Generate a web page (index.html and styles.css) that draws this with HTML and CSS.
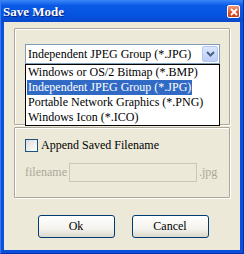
FILE: index.html
```html
<!DOCTYPE html>
<html lang="en">
<head>
    <meta charset="UTF-8">
    <title>Save Mode</title>
    <link rel="stylesheet" href="styles.css">
</head>
<body>
    <div class="window">
        <div class="titlebar">
            <span class="title">Save Mode</span>
            <span class="close-btn">
                <svg width="8" height="8" viewBox="0 0 8 8">
                    <path d="M1 1 L7 7 M7 1 L1 7" stroke="#fff" stroke-width="1.8"/>
                </svg>
            </span>
        </div>

        <div class="client">
            <div class="group group-format">
                <div class="combo">
                    <span class="combo-text">Independent JPEG Group (*.JPG)</span>
                    <span class="combo-arrow">
                        <svg width="9" height="6" viewBox="0 0 9 6">
                            <path d="M1 1 L4.5 4.5 L8 1" fill="none" stroke="#4d6185" stroke-width="2"/>
                        </svg>
                    </span>
                </div>
                <ul class="combo-list">
                    <li>Windows or OS/2 Bitmap (*.BMP)</li>
                    <li class="selected"><span>Independent JPEG Group (*.JPG)</span></li>
                    <li>Portable Network Graphics (*.PNG)</li>
                    <li>Windows Icon (*.ICO)</li>
                </ul>
            </div>

            <div class="group group-options">
                <label class="check-row">
                    <span class="checkbox"></span>
                    <span>Append Saved Filename</span>
                </label>
                <div class="name-row">
                    <span class="muted">filename</span>
                    <span class="text-input"></span>
                    <span class="muted">.jpg</span>
                </div>
            </div>

            <div class="buttons">
                <button class="btn">Ok</button>
                <button class="btn">Cancel</button>
            </div>
        </div>
    </div>
</body>
</html>
```

FILE: styles.css
```css
* {
    margin: 0;
    padding: 0;
    box-sizing: border-box;
}

body {
    font-family: 'Liberation Serif', 'Times New Roman', serif;
    font-size: 12px;
    color: #000;
    background: #fff;
}

.window {
    width: 244px;
    height: 254px;
    background: #0a50dc;
    display: flex;
    flex-direction: column;
    border-left: 1px solid #3a78f0;
    border-right: 1px solid #0831a8;
    border-bottom: 1px solid #0831a8;
}

.titlebar {
    height: 22px;
    display: flex;
    align-items: center;
    justify-content: space-between;
    padding: 0 3px 0 2px;
    background: linear-gradient(180deg, #3c86f8 0%, #0a5ae6 25%, #0452df 75%, #0a48c8 100%);
}

.title {
    color: #fff;
    font-weight: bold;
    font-size: 13px;
    text-shadow: 1px 1px #0a1f7a;
    margin-top: 1px;
}

.close-btn {
    width: 13px;
    height: 13px;
    margin-top: 1px;
    display: flex;
    align-items: center;
    justify-content: center;
    background: linear-gradient(180deg, #f09a80, #e0502c 60%, #c8401c);
    border: 1px solid #fff;
    border-radius: 2px;
}

.client {
    flex: 1;
    margin: 0 3px 3px;
    background: #ece9d8;
    padding: 6px 10px 0;
    position: relative;
}

.group {
    border: 1px solid #aca899;
    box-shadow: inset 1px 1px #fff, 1px 1px #fff;
    border-radius: 1px;
}

.group-format {
    height: 97px;
    padding: 15px 10px 0;
    position: relative;
}

.combo {
    height: 20px;
    width: 195px;
    border: 1px solid #7f9db9;
    background: #fff;
    display: flex;
    align-items: center;
    justify-content: space-between;
    padding: 0 1px 0 2px;
}

.combo-arrow {
    width: 16px;
    height: 16px;
    display: flex;
    align-items: center;
    justify-content: center;
    background: linear-gradient(180deg, #dce7fd, #bccdf6);
    border: 1px solid #b5c7f0;
    border-radius: 2px;
}

.combo-list {
    position: absolute;
    left: 10px;
    top: 35px;
    width: 195px;
    list-style: none;
    background: #fff;
    border: 1px solid #000;
    z-index: 2;
}

.combo-list li {
    height: 15px;
    line-height: 15px;
    padding-left: 2px;
    white-space: nowrap;
}

.combo-list .selected span {
    display: inline-block;
    background: #316ac5;
    color: #fff;
    padding: 0 1px;
    margin-left: -1px;
}

.group-options {
    margin-top: 2px;
    height: 71px;
    padding: 10px 10px 0;
}

.check-row {
    display: flex;
    align-items: center;
    gap: 3px;
    height: 14px;
}

.checkbox {
    width: 13px;
    height: 13px;
    border: 1px solid #1c5180;
    background: linear-gradient(135deg, #dcdcd7, #fff);
}

.name-row {
    display: flex;
    align-items: center;
    gap: 2px;
    margin-top: 11px;
}

.muted {
    color: #aca899;
}

.text-input {
    width: 128px;
    height: 19px;
    border: 1px solid #c9c7ba;
    background: #ece9d8;
}

.buttons {
    display: flex;
    justify-content: center;
    gap: 17px;
    margin-top: 17px;
    margin-left: 2px;
}

.btn {
    width: 77px;
    height: 23px;
    font-family: inherit;
    font-size: 12px;
    border: 1px solid #003c74;
    border-radius: 3px;
    background: linear-gradient(180deg, #fff 0%, #f4f3ee 60%, #dcd8cb 100%);
    color: #000;
}
```
